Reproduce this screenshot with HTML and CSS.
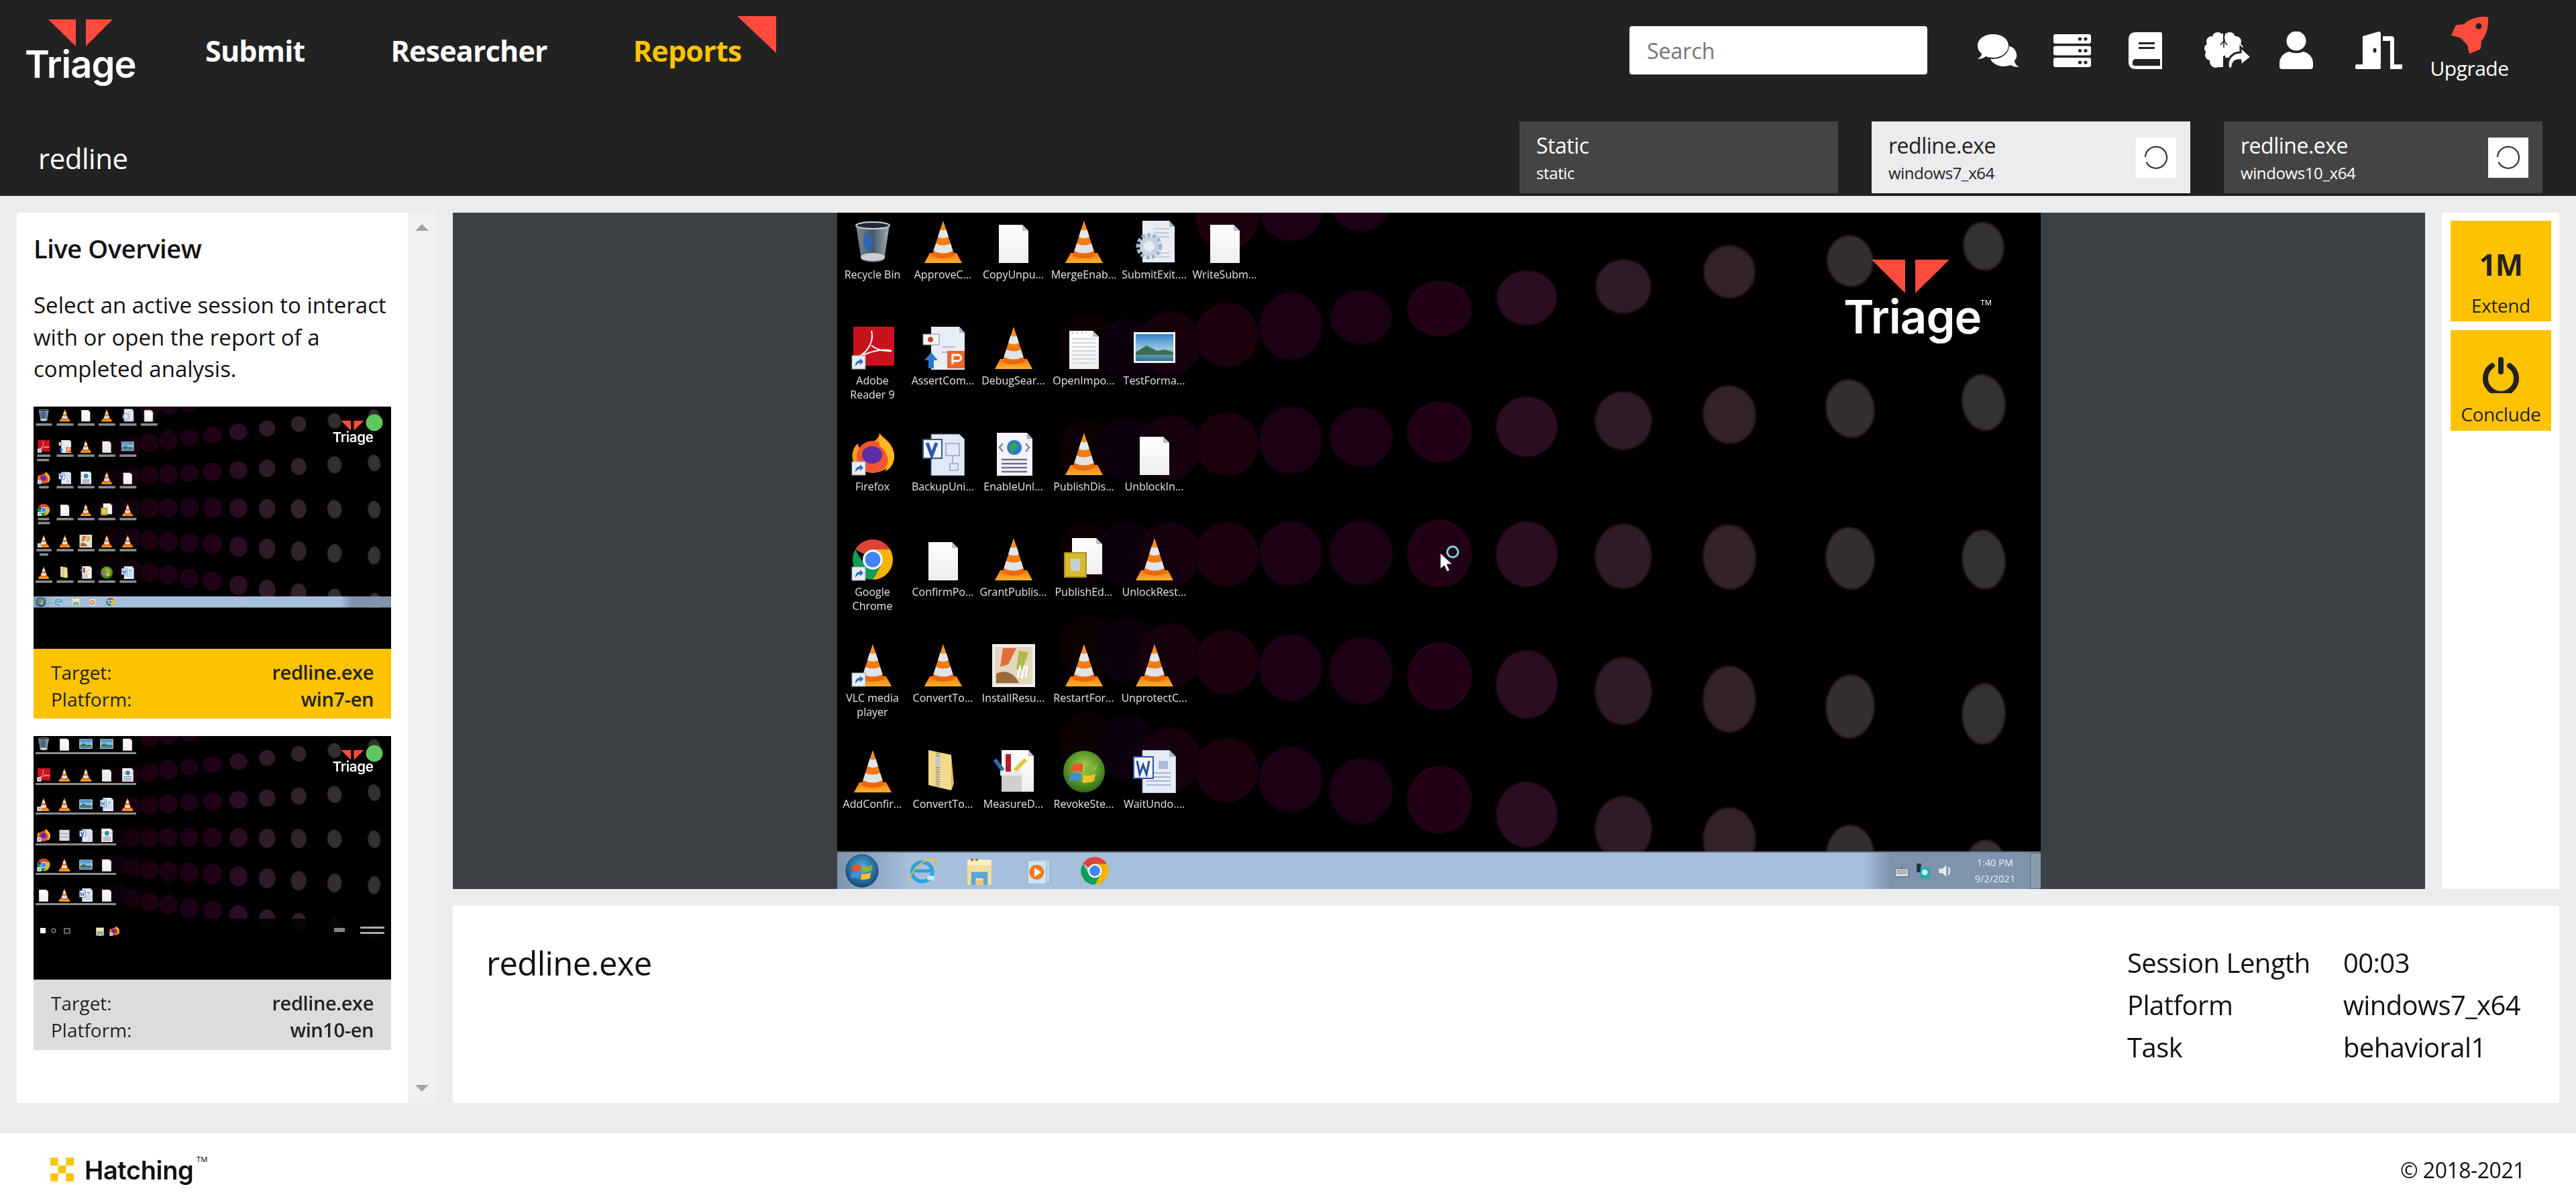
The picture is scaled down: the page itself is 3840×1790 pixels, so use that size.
FILE: index.html
```html
<!DOCTYPE html>
<html lang="en">
<head>
<meta charset="utf-8">
<title>Triage - redline</title>
<link rel="stylesheet" href="styles.css">
</head>
<body>
<svg class="sprite" aria-hidden="true">
  <defs>
    <linearGradient id="gOrange" x1="0" y1="0" x2="0" y2="1"><stop offset="0" stop-color="#ff9a1e"/><stop offset="1" stop-color="#e8650a"/></linearGradient>
    <linearGradient id="gBase" x1="0" y1="0" x2="0" y2="1"><stop offset="0" stop-color="#f0790d"/><stop offset="1" stop-color="#ffb22e"/></linearGradient>
    <linearGradient id="gPage" x1="0" y1="0" x2="0" y2="1"><stop offset="0" stop-color="#ffffff"/><stop offset="1" stop-color="#eeeeee"/></linearGradient>
    <linearGradient id="gBin" x1="0" y1="0" x2="1" y2="0"><stop offset="0" stop-color="#7b8a94"/><stop offset=".5" stop-color="#46586a"/><stop offset="1" stop-color="#a2adb5"/></linearGradient>
    <linearGradient id="gSky" x1="0" y1="0" x2="0" y2="1"><stop offset="0" stop-color="#2f83c9"/><stop offset=".55" stop-color="#9cc9e0"/><stop offset="1" stop-color="#2a6e96"/></linearGradient>
    <linearGradient id="gBar" x1="0" y1="0" x2="1" y2="0"><stop offset="0" stop-color="#7e94ac"/><stop offset=".06" stop-color="#a6bfdc"/><stop offset=".86" stop-color="#a6bfdc"/><stop offset=".89" stop-color="#7f93ad"/><stop offset="1" stop-color="#7f93ad"/></linearGradient>
    <radialGradient id="gOrb" cx=".5" cy=".4" r=".6"><stop offset="0" stop-color="#a8d84e"/><stop offset="1" stop-color="#2e6b12"/></radialGradient>
    <radialGradient id="gStart" cx=".5" cy=".4" r=".6"><stop offset="0" stop-color="#5bb2e0"/><stop offset="1" stop-color="#0f4a7c"/></radialGradient>
    <filter id="soft"><feGaussianBlur stdDeviation="1.6"/></filter>
  </defs>

  <symbol id="chat" viewBox="0 0 62 49"><path d="M27 25C38 18 50 14 56 24c4 7 2 13-1 15 0 4 3 8 7 10-5 0-10-1-13-3-5 2-14 3-20 0-6-3-9-6-10-10z" fill="#fff"/><ellipse cx="23" cy="17.500" rx="24" ry="19.500" fill="#222"/><path d="M23 0C10 0 0 7 0 17c0 5 2 9 6 12 0 3-2 5-6 8 4 0 9-1 12-4 3 1 7 2 11 2 13 0 23-8 23-18S36 0 23 0z" fill="#fff"/></symbol>
  <symbol id="servers" viewBox="0 0 56 49"><g fill="#fff"><rect width="56" height="14" rx="3"/><rect y="17.500" width="56" height="14" rx="3"/><rect y="35" width="56" height="14" rx="3"/></g><g fill="#222"><circle cx="39.500" cy="7" r="2.600"/><circle cx="48" cy="7" r="2.600"/><circle cx="39.500" cy="24.500" r="2.600"/><circle cx="48" cy="24.500" r="2.600"/><circle cx="39.500" cy="42" r="2.600"/><circle cx="48" cy="42" r="2.600"/></g></symbol>
  <symbol id="book" viewBox="0 0 50 55"><path d="M11 0H48q2 0 2 2V40H8v10h42v3q0 2-2 2H11Q0 55 0 44V11Q0 0 11 0z" fill="#fff"/><path d="M8 42H50V49H8q-4 0-4-3.500T8 42z" fill="#222"/><path d="M47 40h3v15h-3z" fill="#fff"/><rect x="15" y="15" width="24" height="3" fill="#222"/><rect x="15" y="22" width="24" height="3" fill="#222"/><path d="M2 40h4v8h-4z" fill="#fff"/></symbol>
  <symbol id="brain" viewBox="0 0 70 54"><g fill="#fff"><circle cx="20" cy="8" r="8"/><circle cx="11" cy="14" r="8"/><circle cx="7" cy="24" r="7"/><circle cx="9" cy="34" r="8"/><circle cx="17" cy="44" r="9"/><circle cx="20" cy="26" r="13"/><rect x="17" y="2" width="11" height="50"/><circle cx="38" cy="8" r="8"/><circle cx="47" cy="14" r="8"/><circle cx="51" cy="24" r="7"/><circle cx="38" cy="24" r="13"/><rect x="31" y="2" width="11" height="36"/></g><path d="M29 13v10M29 13l-5 6M29 13l5 6" stroke="#222" stroke-width="1.600" fill="none"/><path d="M36 54C32 40 42 30 54 30V22L70 37 54 50V42C46 41 41 45 42 54z" fill="#fff" stroke="#222" stroke-width="3"/></symbol>
  <symbol id="person" viewBox="0 0 50 56"><circle cx="25" cy="14" r="14.500" fill="#fff"/><path d="M0 47C0 38 7 31 15 30c6 3 14 3 20 0 8 1 15 8 15 17v5q0 4-4 4H4q-4 0-4-4z" fill="#fff"/></symbol>
  <symbol id="door" viewBox="0 0 70 56"><path d="M11 7 35 0q3 0 3 3V49H11z" fill="#fff"/><rect y="49" width="38" height="7" rx="2" fill="#fff"/><ellipse cx="29" cy="28" rx="2.500" ry="3.500" fill="#222"/><path d="M41 7H54q4 0 4 4V49H70v5q0 2-2 2H52V14H41z" fill="#fff"/></symbol>
  <symbol id="rocket" viewBox="0 0 55 55"><path d="M53 0Q55 0 55 2C56 16 52 28 45 36L44 46Q44 48 42 49L27 55 24 42 13 31 0 28 6 14Q7 12 9 12L19 11C27 3 40-1 53 0z" fill="#ff4b3e"/><circle cx="41" cy="14" r="4.500" fill="#222"/></symbol>
  <symbol id="power" viewBox="0 0 54 54"><path d="M14 13a23 23 0 1 0 26 0" fill="none" stroke="#222" stroke-width="8" stroke-linecap="round"/><rect x="23" width="8" height="26" rx="4" fill="#222"/></symbol>
  <symbol id="spin" viewBox="0 0 36 36"><path d="M2 17A16 16 0 1 1 3.500 24.500" fill="none" stroke="#333" stroke-width="2.200"/></symbol>

  <symbol id="sc" viewBox="0 0 22 22"><rect x="1" y="1" width="20" height="20" fill="#e9eef3" stroke="#9aa3ab"/><path d="M6 17c0-6 3-9 7-9V5l5 5-5 5v-3c-3 0-5 2-7 5z" fill="#2a6fc4"/></symbol>
  <symbol id="cone" viewBox="0 0 64 64"><path d="M4 63 12 48H52L60 63z" fill="url(#gBase)"/><path d="M32 0 49 52Q32 60 15 52z" fill="url(#gOrange)"/><path d="M27.500 13Q32 16 36.500 13L40 24Q32 28 24 24z" fill="#e4e8ea"/><path d="M21 34Q32 39 43 34L46.500 45Q32 52 17.500 45z" fill="#dfe4e6"/></symbol>
  <symbol id="cones" viewBox="0 0 64 64"><use href="#cone" width="64" height="64"/><use href="#sc" x="0" y="42" width="22" height="22"/></symbol>
  <symbol id="doc" viewBox="0 0 64 64"><path d="M10 6H45L54 15V63H10z" fill="url(#gPage)"/><path d="M45 6 54 15H45z" fill="#b9c0c6"/></symbol>
  <symbol id="lines" viewBox="0 0 64 64"><use href="#doc" width="64" height="64"/><path d="M14 18H50M14 24H50M14 30H50M14 36H50M14 42H50M14 48H50M14 54H50" stroke="#c5cdd6" stroke-width="1.400"/><path d="M14 9h22" stroke="#aaa" stroke-width="2" stroke-dasharray="2 5"/></symbol>
  <symbol id="recycle" viewBox="0 0 64 64"><path d="M7 6Q32-2 57 6L49 58Q32 66 15 58z" fill="url(#gBin)"/><ellipse cx="32" cy="7" rx="25" ry="5" fill="#1d2a36" stroke="#cfd7dc" stroke-width="2"/><path d="M20 18l10 4 2 14-8 10-6-12z" fill="#2f67b5"/><ellipse cx="32" cy="54" rx="18" ry="6" fill="#c9ced1"/></symbol>
  <symbol id="adobe" viewBox="0 0 64 64"><rect x="3" y="0" width="61" height="58" fill="#c8121c"/><path d="M30 6c4 14-4 30-18 38M30 28c8 6 18 9 30 8-10-3-22-2-42 6" fill="none" stroke="#fff" stroke-width="2"/><use href="#sc" x="0" y="42" width="22" height="22"/></symbol>
  <symbol id="ppt" viewBox="0 0 64 64"><path d="M14 0H56L64 9V64H14z" fill="#e8eef6"/><path d="M56 0 64 9H56z" fill="#aab7c4"/><rect x="2" y="11" width="24" height="16" fill="#f4f6f8" stroke="#7b8794"/><circle cx="13" cy="19" r="4" fill="#c0442b"/><path d="M30 30H50M30 38H46" stroke="#b2bdcb" stroke-width="2"/><rect x="38" y="36" width="26" height="26" fill="#e9672d"/><path d="M46 56V42h8a4 4 0 0 1 0 9h-8" fill="none" stroke="#fff" stroke-width="3"/><path d="M10 62V50H4L14 38l10 12h-6v12z" fill="#2a78d2"/></symbol>
  <symbol id="photo" viewBox="0 0 64 64"><rect x="1" y="8" width="62" height="46" fill="#eef2f5"/><rect x="4" y="11" width="56" height="40" fill="url(#gSky)"/><path d="M4 38 20 28 36 36 48 34 60 38V42H4z" fill="#3d6d55"/></symbol>
  <symbol id="firefox" viewBox="0 0 64 64"><path d="M42 0C46 8 64 14 64 36A32 28 0 0 1 2 40C0 30 4 20 10 16c0 4 2 8 8 8C24 14 42 14 42 0z" fill="#ff9a1e"/><circle cx="32" cy="36" r="24" fill="#f2542d"/><path d="M42 2c6 10 22 14 22 34 0 10-6 18-14 22 8-10 6-30-8-38z" fill="#ffb81f"/><ellipse cx="31" cy="33" rx="15" ry="13" fill="#5b2ea8"/><use href="#sc" x="0" y="42" width="22" height="22"/></symbol>
  <symbol id="visio" viewBox="0 0 64 64"><path d="M14 2H56L64 10V64H14z" fill="#e2e8f4" stroke="#4b6aa5"/><path d="M36 16H56V34H36zM42 46H54V56H42z" fill="none" stroke="#8fa3c8" stroke-width="1.500"/><path d="M46 34V46" stroke="#8fa3c8" stroke-width="1.500"/><rect x="2" y="10" width="28" height="28" fill="#f4f6fb" stroke="#35558f" stroke-width="2"/><path d="M8 15l7 19 7-19" fill="none" stroke="#2e56b4" stroke-width="5"/></symbol>
  <symbol id="html" viewBox="0 0 64 64"><path d="M7 0H52L60 9V64H7z" fill="#f4f4f8"/><path d="M52 0 60 9H52z" fill="#aab"/><circle cx="33" cy="22" r="11" fill="#2a7bd0"/><path d="M26 18l8-5 4 8-6 5-1 6-5-7z" fill="#3aa34a"/><path d="M16 16l-5 6 5 6M50 16l5 6-5 6" fill="none" stroke="#7b8aa0" stroke-width="2.500"/><path d="M14 40H52M14 46H52M14 52H52M14 58H52" stroke="#6b6f8a" stroke-width="2.500"/></symbol>
  <symbol id="chrome" viewBox="0 0 64 64"><path d="M6 17A30 30 0 0 1 58 17H32A15 15 0 0 0 19 24z" fill="#db4437"/><path d="M58 17A30 30 0 0 1 32 62L45 39A15 15 0 0 0 32 17z" fill="#f4b400"/><path d="M32 62A30 30 0 0 1 6 17L19 39A15 15 0 0 0 45 39z" fill="#0f9d58"/><circle cx="32" cy="32" r="15" fill="#fff"/><circle cx="32" cy="32" r="11.500" fill="#4285f4"/></symbol>
  <symbol id="chromes" viewBox="0 0 64 64"><use href="#chrome" width="64" height="64"/><use href="#sc" x="0" y="42" width="22" height="22"/></symbol>
  <symbol id="frame" viewBox="0 0 64 64"><path d="M14 0H50L59 9V54H14z" fill="url(#gPage)"/><path d="M50 0 59 9H50z" fill="#b9c0c6"/><rect x="3" y="22" width="32" height="36" fill="#d6bc2a" stroke="#a8901a" stroke-width="2"/><rect x="12" y="31" width="14" height="18" fill="#c8ced2"/></symbol>
  <symbol id="paint" viewBox="0 0 64 64"><rect width="64" height="64" fill="#f1efe8"/><rect x="4" y="4" width="56" height="56" fill="#e2d8c0"/><path d="M16 6 36 6 24 30 12 34z" fill="#e46b3a"/><path d="M40 10l14 2-8 24-10 2z" fill="#b2b94a"/><path d="M6 44c14-6 26-2 34 14H6z" fill="#9a6a3c"/><path d="M38 50 42 32M44 52 48 32M50 50 52 32" stroke="#fff" stroke-width="2.500"/></symbol>
  <symbol id="zip" viewBox="0 0 64 64"><path d="M10 0 44 7V60L10 52z" fill="#f0db8c"/><path d="M44 7 48 50 44 60z" fill="#d8b95a"/><path d="M24 4V54" stroke="#9a9a9a" stroke-width="6" stroke-dasharray="2 1.500"/><rect x="20" y="10" width="8" height="14" rx="3" fill="#c7c9cc"/></symbol>
  <symbol id="tools" viewBox="0 0 64 64"><path d="M14 0H54L62 9V62H14z" fill="url(#gPage)"/><path d="M54 0 62 9H54z" fill="#b9c0c6"/><path d="M14 34H44V62H14z" fill="#cfcfcf"/><path d="M12 30H44V38H12z" fill="#e8e8e8"/><rect x="20" y="6" width="8" height="26" fill="#b81d24"/><path d="M4 14 16 30" stroke="#2a6fa8" stroke-width="6"/><path d="M50 14 34 30" stroke="#e1c63a" stroke-width="6"/></symbol>
  <symbol id="orb" viewBox="0 0 64 64"><circle cx="32" cy="32" r="31" fill="url(#gOrb)"/><path d="M14 22Q24 17 31 22L29 33Q20 29 12 33z" fill="#e9572c"/><path d="M34 22Q42 27 52 20L50 31Q42 36 32 33z" fill="#82b83a"/><path d="M12 36Q20 32 28 36L26 47Q18 43 10 47z" fill="#3f8fd8"/><path d="M31 37Q40 40 49 35L47 46Q38 50 29 48z" fill="#f5c228"/></symbol>
  <symbol id="word" viewBox="0 0 64 64"><path d="M14 0H54L64 10V64H14z" fill="#e4ecf8" stroke="#8aa2c8"/><path d="M54 0 64 10H54z" fill="#a8b8cc"/><path d="M20 34H56M20 40H56M20 46H56M20 52H56" stroke="#8ea4c4" stroke-width="1.500"/><rect x="38" y="16" width="14" height="12" fill="#a8bcd8"/><rect x="1" y="10" width="29" height="32" fill="#f0f3fa" stroke="#2a54a4" stroke-width="2"/><path d="M6 16l4 20 5-14 5 14 4-20" fill="none" stroke="#244c9c" stroke-width="3"/></symbol>
  <symbol id="gear" viewBox="0 0 64 64"><path d="M14 0H54L62 9V62H14z" fill="#e9edf3"/><path d="M54 0 62 9H54z" fill="#aab4c0"/><path d="M30 12H54M30 18H54M30 24H54M34 48H54M36 54H54" stroke="#b5c0cd" stroke-width="1.500"/><circle cx="24" cy="38" r="15" fill="none" stroke="#9db4cc" stroke-width="9" stroke-dasharray="5 2.500"/><circle cx="24" cy="38" r="11" fill="none" stroke="#c5d2e0" stroke-width="6"/></symbol>
  <symbol id="start" viewBox="0 0 64 64"><circle cx="32" cy="32" r="31" fill="url(#gStart)" stroke="#1a3a5c"/><path d="M14 22Q24 17 31 22L29 33Q20 29 12 33z" fill="#e9572c"/><path d="M34 22Q42 27 52 20L50 31Q42 36 32 33z" fill="#82b83a"/><path d="M12 36Q20 32 28 36L26 47Q18 43 10 47z" fill="#3f8fd8"/><path d="M31 37Q40 40 49 35L47 46Q38 50 29 48z" fill="#f5c228"/></symbol>
  <symbol id="ie" viewBox="0 0 64 64"><ellipse cx="33" cy="34" rx="22" ry="21" fill="none" stroke="#2ba3e6" stroke-width="8"/><path d="M12 32H56" stroke="#2ba3e6" stroke-width="7"/><path d="M44 47H58" stroke="#c9edfb" stroke-width="9"/><path d="M6 56C2 42 30 6 56 6c6 2 4 10 0 16" fill="none" stroke="#f1c40f" stroke-width="2.500"/></symbol>
  <symbol id="explorer" viewBox="0 0 64 64"><path d="M6 8H58V62H6z" fill="#f4df9a"/><path d="M6 8H58V20H6z" fill="#faeec2"/><circle cx="16" cy="8" r="3" fill="#d94a2a"/><circle cx="26" cy="8" r="3" fill="#58a23a"/><path d="M14 34H50V62H40V48H24V62H14z" fill="#5aa6d8"/><rect x="24" y="52" width="16" height="10" fill="#f0c870"/></symbol>
  <symbol id="wmp" viewBox="0 0 64 64"><rect x="20" y="6" width="40" height="52" fill="#b7d4ea" stroke="#6b9fc8"/><rect x="12" y="10" width="40" height="50" fill="#cfe4f2" stroke="#7ba8cc"/><circle cx="31" cy="35" r="16" fill="#ee7b1e"/><path d="M26 25 41 35 26 45z" fill="#fff"/></symbol>
  <symbol id="printer" viewBox="0 0 64 64"><rect x="8" y="6" width="48" height="52" fill="#d9dde0"/><rect x="8" y="22" width="48" height="4" fill="#9aa1a6"/><rect x="8" y="38" width="48" height="4" fill="#9aa1a6"/></symbol>

  <symbol id="wall" viewBox="0 0 1794 1008">
    <g filter="url(#soft)">
      <g fill="#0c0206"><ellipse cx="372" cy="195" rx="42" ry="46"/><ellipse cx="372" cy="355" rx="42" ry="46"/><ellipse cx="372" cy="508" rx="42" ry="46"/><ellipse cx="372" cy="645" rx="42" ry="46"/><ellipse cx="372" cy="790" rx="42" ry="46"/></g>
      <g fill="#100307"><ellipse cx="432" cy="205" rx="45" ry="47"/><ellipse cx="432" cy="352" rx="45" ry="47"/><ellipse cx="432" cy="508" rx="45" ry="48"/><ellipse cx="432" cy="652" rx="45" ry="48"/><ellipse cx="432" cy="798" rx="45" ry="48"/></g>
      <g fill="#140309"><ellipse cx="496" cy="195" rx="46" ry="48"/><ellipse cx="496" cy="350" rx="46" ry="48"/><ellipse cx="496" cy="509" rx="46" ry="48"/><ellipse cx="496" cy="660" rx="46" ry="48"/><ellipse cx="496" cy="815" rx="46" ry="48"/></g>
      <g fill="#1a030f"><ellipse cx="581" cy="10" rx="47" ry="46"/><ellipse cx="581" cy="182" rx="47" ry="48"/><ellipse cx="581" cy="345" rx="47" ry="48"/><ellipse cx="581" cy="509" rx="47" ry="48"/><ellipse cx="581" cy="670" rx="47" ry="48"/><ellipse cx="581" cy="831" rx="47" ry="48"/></g>
      <g fill="#1d0412"><ellipse cx="676" cy="-4" rx="47" ry="46"/><ellipse cx="676" cy="169" rx="47" ry="50"/><ellipse cx="676" cy="339" rx="47" ry="50"/><ellipse cx="676" cy="508" rx="47" ry="48"/><ellipse cx="676" cy="678" rx="47" ry="50"/><ellipse cx="676" cy="845" rx="47" ry="49"/></g>
      <g fill="#1f0414"><ellipse cx="781" cy="-18" rx="47" ry="46"/><ellipse cx="781" cy="156" rx="46" ry="40"/><ellipse cx="781" cy="334" rx="47" ry="44"/><ellipse cx="781" cy="507" rx="47" ry="48"/><ellipse cx="781" cy="683" rx="47" ry="50"/><ellipse cx="781" cy="862" rx="47" ry="49"/></g>
      <g stroke="#48101f" stroke-opacity=".45" stroke-width="2">
      <g fill="#220519"><ellipse cx="898" cy="143" rx="47" ry="40"/><ellipse cx="898" cy="327" rx="47" ry="44"/><ellipse cx="898" cy="508" rx="47" ry="49"/><ellipse cx="898" cy="691" rx="47" ry="49"/><ellipse cx="898" cy="875" rx="47" ry="49"/></g>
      <g fill="#2b1024"><ellipse cx="1028" cy="127" rx="44" ry="40"/><ellipse cx="1028" cy="319" rx="45" ry="44"/><ellipse cx="1028" cy="509" rx="45" ry="48"/><ellipse cx="1028" cy="703" rx="45" ry="50"/><ellipse cx="1028" cy="897" rx="45" ry="48"/></g>
      <g fill="#2d1b25"><ellipse cx="1172" cy="110" rx="41" ry="40"/><ellipse cx="1172" cy="310" rx="42" ry="43"/><ellipse cx="1172" cy="512" rx="42" ry="48"/><ellipse cx="1172" cy="713" rx="42" ry="50"/><ellipse cx="1172" cy="918" rx="42" ry="48"/></g>
      <g fill="#302329"><ellipse cx="1330" cy="88" rx="38" ry="39" transform="rotate(-8 1330 88)"/><ellipse cx="1330" cy="301" rx="39" ry="43" transform="rotate(-8 1330 301)"/><ellipse cx="1330" cy="513" rx="39" ry="48" transform="rotate(-5 1330 513)"/><ellipse cx="1330" cy="725" rx="39" ry="49"/><ellipse cx="1330" cy="934" rx="39" ry="47"/></g>
      <g fill="#322d30"><ellipse cx="1510" cy="72" rx="34" ry="38" transform="rotate(-10 1510 72)"/><ellipse cx="1510" cy="292" rx="36" ry="43" transform="rotate(-10 1510 292)"/><ellipse cx="1510" cy="515" rx="36" ry="46" transform="rotate(-6 1510 515)"/><ellipse cx="1510" cy="736" rx="36" ry="47" transform="rotate(3 1510 736)"/><ellipse cx="1510" cy="960" rx="36" ry="47"/></g>
      <g fill="#313031"><ellipse cx="1709" cy="50" rx="30" ry="36" transform="rotate(-10 1709 50)"/><ellipse cx="1709" cy="283" rx="32" ry="42" transform="rotate(-10 1709 283)"/><ellipse cx="1709" cy="517" rx="32" ry="44" transform="rotate(-6 1709 517)"/><ellipse cx="1709" cy="747" rx="32" ry="45" transform="rotate(3 1709 747)"/><ellipse cx="1712" cy="979" rx="32" ry="44"/></g>
      </g>
    </g>
  </symbol>
  <symbol id="tris" viewBox="0 0 116 50"><path d="M0 0H50V50zM65 0H116L65 50z" fill="#ff4b3e"/></symbol>
  <symbol id="w7icons" viewBox="0 0 1794 1008">
    <use href="#recycle" x="19" y="12" width="64" height="64"/><use href="#cone" x="125" y="12" width="64" height="64"/><use href="#doc" x="230" y="12" width="64" height="64"/><use href="#cone" x="335" y="12" width="64" height="64"/><use href="#gear" x="440" y="12" width="64" height="64"/><use href="#doc" x="545" y="12" width="64" height="64"/>
    <use href="#adobe" x="19" y="168" width="64" height="64"/><use href="#ppt" x="125" y="168" width="64" height="64"/><use href="#cone" x="230" y="168" width="64" height="64"/><use href="#lines" x="335" y="168" width="64" height="64"/><use href="#photo" x="440" y="168" width="64" height="64"/>
    <use href="#firefox" x="19" y="326" width="64" height="64"/><use href="#visio" x="125" y="326" width="64" height="64"/><use href="#html" x="230" y="326" width="64" height="64"/><use href="#cone" x="335" y="326" width="64" height="64"/><use href="#doc" x="440" y="326" width="64" height="64"/>
    <use href="#chromes" x="19" y="486" width="64" height="64"/><use href="#doc" x="125" y="486" width="64" height="64"/><use href="#cone" x="230" y="486" width="64" height="64"/><use href="#frame" x="335" y="486" width="64" height="64"/><use href="#cone" x="440" y="486" width="64" height="64"/>
    <use href="#cones" x="19" y="643" width="64" height="64"/><use href="#cone" x="125" y="643" width="64" height="64"/><use href="#paint" x="230" y="643" width="64" height="64"/><use href="#cone" x="335" y="643" width="64" height="64"/><use href="#cone" x="440" y="643" width="64" height="64"/>
    <use href="#cone" x="19" y="801" width="64" height="64"/><use href="#zip" x="125" y="801" width="64" height="64"/><use href="#tools" x="230" y="801" width="64" height="64"/><use href="#orb" x="335" y="801" width="64" height="64"/><use href="#word" x="440" y="801" width="64" height="64"/>
    <g fill="#8d8d8d"><rect x="12" y="84" width="80" height="12"/><rect x="116" y="84" width="84" height="12"/><rect x="222" y="84" width="84" height="12"/><rect x="326" y="84" width="84" height="12"/><rect x="432" y="84" width="84" height="12"/><rect x="538" y="84" width="84" height="12"/>
    <rect x="18" y="240" width="66" height="12"/><rect x="18" y="262" width="60" height="12"/><rect x="116" y="240" width="84" height="12"/><rect x="222" y="240" width="84" height="12"/><rect x="326" y="240" width="84" height="12"/><rect x="432" y="240" width="84" height="12"/>
    <rect x="28" y="398" width="48" height="12"/><rect x="116" y="398" width="84" height="12"/><rect x="222" y="398" width="84" height="12"/><rect x="326" y="398" width="84" height="12"/><rect x="432" y="398" width="84" height="12"/>
    <rect x="22" y="558" width="56" height="12"/><rect x="22" y="578" width="60" height="12"/><rect x="116" y="558" width="84" height="12"/><rect x="222" y="558" width="84" height="12"/><rect x="326" y="558" width="84" height="12"/><rect x="432" y="558" width="84" height="12"/>
    <rect x="14" y="714" width="76" height="12"/><rect x="30" y="736" width="44" height="12"/><rect x="116" y="714" width="84" height="12"/><rect x="222" y="714" width="84" height="12"/><rect x="326" y="714" width="84" height="12"/><rect x="432" y="714" width="84" height="12"/>
    <rect x="10" y="872" width="84" height="12"/><rect x="116" y="872" width="84" height="12"/><rect x="222" y="872" width="84" height="12"/><rect x="326" y="872" width="84" height="12"/><rect x="432" y="872" width="84" height="12"/></g>
  </symbol>
</svg>

<header class="topbar">
  <div class="bar-main">
    <a class="brand">
      <svg class="brand-mark" viewBox="0 0 96 40"><path d="M0 0H41V40zM56 0H96L56 40z" fill="#ff4b3e"/></svg>
      <span class="brand-name">Triage</span>
    </a>
    <nav class="nav">
      <a class="nav-link">Submit</a>
      <a class="nav-link">Researcher</a>
      <a class="nav-link nav-active">Reports<svg class="ribbon" viewBox="0 0 58 55"><path d="M0 0H58V55z" fill="#ff4b3e"/></svg></a>
    </nav>
    <div class="tools">
      <div class="search">Search</div>
      <a class="tool"><svg class="t-chat"><use href="#chat"/></svg></a>
      <a class="tool"><svg class="t-servers"><use href="#servers"/></svg></a>
      <a class="tool"><svg class="t-book"><use href="#book"/></svg></a>
      <a class="tool"><svg class="t-brain"><use href="#brain"/></svg></a>
      <a class="tool"><svg class="t-person"><use href="#person"/></svg></a>
      <a class="tool"><svg class="t-door"><use href="#door"/></svg></a>
      <a class="upgrade"><svg class="t-rocket"><use href="#rocket"/></svg><span>Upgrade</span></a>
    </div>
  </div>
  <div class="bar-sub">
    <h1 class="title">redline</h1>
    <div class="tabs">
      <div class="tab"><div class="tab-text"><b>Static</b><span>static</span></div></div>
      <div class="tab tab-active"><div class="tab-text"><b>redline.exe</b><span>windows7_x64</span></div><div class="spinbox"><svg><use href="#spin"/></svg></div></div>
      <div class="tab"><div class="tab-text"><b>redline.exe</b><span>windows10_x64</span></div><div class="spinbox"><svg><use href="#spin"/></svg></div></div>
    </div>
  </div>
</header>

<main class="layout">
  <aside class="side">
    <div class="side-body">
      <h2 class="side-title">Live Overview</h2>
      <p class="side-text">Select an active session to interact with or open the report of a completed analysis.</p>
      <article class="thumb">
        <svg class="thumb-img" viewBox="0 0 533 361">
          <rect width="533" height="361" fill="#000"/>
          <g transform="scale(.2971)">
            <use href="#wall" width="1794" height="1008"/>
            <use href="#w7icons" width="1794" height="1008"/>
            <use href="#tris" x="1542" y="70" width="116" height="50"/>
            <text class="dlogo-t" x="1500" y="180">Triage</text>
            <rect y="952" width="1794" height="56" fill="url(#gBar)"/>
            <use href="#start" x="12" y="955" width="50" height="50"/><use href="#ie" x="102" y="958" width="44" height="44"/><use href="#explorer" x="190" y="958" width="44" height="44"/><use href="#wmp" x="274" y="958" width="44" height="44"/><use href="#chrome" x="363" y="958" width="44" height="44"/>
          </g>
          <circle cx="508" cy="24" r="12.500" fill="#5fc75f"/>
        </svg>
        <dl class="thumb-info thumb-on"><dt>Target:</dt><dd>redline.exe</dd><dt>Platform:</dt><dd>win7-en</dd></dl>
      </article>
      <article class="thumb">
        <svg class="thumb-img" viewBox="0 0 533 363">
          <rect width="533" height="363" fill="#000"/>
          <use href="#wall" width="533" height="300"/>
          <rect y="272" width="533" height="30" fill="#000" opacity=".85"/>
          <g>
            <use href="#recycle" x="5" y="2" width="20" height="20"/><use href="#doc" x="36" y="2" width="20" height="20"/><use href="#photo" x="68" y="2" width="20" height="20"/><use href="#photo" x="99" y="2" width="20" height="20"/><use href="#doc" x="130" y="2" width="20" height="20"/>
            <use href="#adobe" x="5" y="48" width="20" height="20"/><use href="#cone" x="36" y="48" width="20" height="20"/><use href="#cone" x="68" y="48" width="20" height="20"/><use href="#lines" x="99" y="48" width="20" height="20"/><use href="#html" x="130" y="48" width="20" height="20"/>
            <use href="#cones" x="5" y="92" width="20" height="20"/><use href="#cone" x="36" y="92" width="20" height="20"/><use href="#photo" x="68" y="92" width="20" height="20"/><use href="#word" x="99" y="92" width="20" height="20"/><use href="#cone" x="130" y="92" width="20" height="20"/>
            <use href="#firefox" x="5" y="138" width="20" height="20"/><use href="#printer" x="36" y="138" width="20" height="20"/><use href="#visio" x="68" y="138" width="20" height="20"/><use href="#html" x="99" y="138" width="20" height="20"/>
            <use href="#chromes" x="5" y="182" width="20" height="20"/><use href="#cone" x="36" y="182" width="20" height="20"/><use href="#photo" x="68" y="182" width="20" height="20"/><use href="#doc" x="99" y="182" width="20" height="20"/>
            <use href="#doc" x="5" y="227" width="20" height="20"/><use href="#cone" x="36" y="227" width="20" height="20"/><use href="#word" x="68" y="227" width="20" height="20"/><use href="#doc" x="99" y="227" width="20" height="20"/>
            <g fill="#8d8d8d"><rect x="3" y="24" width="150" height="3"/><rect x="3" y="70" width="150" height="3"/><rect x="3" y="114" width="150" height="3"/><rect x="3" y="160" width="120" height="3"/><rect x="3" y="204" width="120" height="3"/><rect x="3" y="249" width="120" height="3"/></g>
            <use href="#explorer" x="92" y="284" width="14" height="14"/><use href="#firefox" x="113" y="283" width="15" height="15"/><rect x="10" y="286" width="8" height="8" fill="#fff"/><circle cx="30" cy="290" r="3" fill="none" stroke="#ccc"/><rect x="46" y="287" width="8" height="7" fill="none" stroke="#ccc"/>
            <rect x="487" y="284" width="36" height="3" fill="#aaa"/><rect x="487" y="292" width="36" height="3" fill="#aaa"/><rect x="448" y="286" width="16" height="6" fill="#888"/>
          </g>
          <g transform="scale(.2971)">
            <use href="#tris" x="1542" y="70" width="116" height="50"/>
            <text class="dlogo-t" x="1500" y="180">Triage</text>
          </g>
          <circle cx="508" cy="26" r="12.500" fill="#5fc75f"/>
        </svg>
        <dl class="thumb-info thumb-off"><dt>Target:</dt><dd>redline.exe</dd><dt>Platform:</dt><dd>win10-en</dd></dl>
      </article>
    </div>
    <div class="scroll"><i class="arrow arrow-up"></i><i class="arrow arrow-down"></i></div>
  </aside>

  <section class="screen">
    <div class="desktop">
      <svg class="desk-wall" viewBox="0 0 1794 1008">
        <use href="#wall" width="1794" height="1008"/>
        <use href="#tris" x="1542" y="70" width="116" height="50"/>
        <text class="dlogo-t" x="1500" y="180">Triage</text>
        <text class="dlogo-tm" x="1704" y="138">TM</text>
        <circle cx="917.500" cy="505.600" r="8" fill="none" stroke="#7fd6da" stroke-width="3"/>
        <path d="M899 507v24l6-5 4 9 4-2-4-9h8z" fill="#fff" stroke="#111"/>
      </svg>
      <div class="desk-icons">
        <div class="desk-row">
          <div class="dicon"><svg><use href="#recycle"/></svg><span>Recycle Bin</span></div>
          <div class="dicon"><svg><use href="#cone"/></svg><span>ApproveC...</span></div>
          <div class="dicon"><svg><use href="#doc"/></svg><span>CopyUnpu...</span></div>
          <div class="dicon"><svg><use href="#cone"/></svg><span>MergeEnab...</span></div>
          <div class="dicon"><svg><use href="#gear"/></svg><span>SubmitExit....</span></div>
          <div class="dicon"><svg><use href="#doc"/></svg><span>WriteSubm...</span></div>
        </div>
        <div class="desk-row">
          <div class="dicon"><svg><use href="#adobe"/></svg><span>Adobe<br>Reader 9</span></div>
          <div class="dicon"><svg><use href="#ppt"/></svg><span>AssertCom...</span></div>
          <div class="dicon"><svg><use href="#cone"/></svg><span>DebugSear...</span></div>
          <div class="dicon"><svg><use href="#lines"/></svg><span>OpenImpo...</span></div>
          <div class="dicon"><svg><use href="#photo"/></svg><span>TestForma...</span></div>
        </div>
        <div class="desk-row">
          <div class="dicon"><svg><use href="#firefox"/></svg><span>Firefox</span></div>
          <div class="dicon"><svg><use href="#visio"/></svg><span>BackupUni...</span></div>
          <div class="dicon"><svg><use href="#html"/></svg><span>EnableUnl...</span></div>
          <div class="dicon"><svg><use href="#cone"/></svg><span>PublishDis...</span></div>
          <div class="dicon"><svg><use href="#doc"/></svg><span>UnblockIn...</span></div>
        </div>
        <div class="desk-row">
          <div class="dicon"><svg><use href="#chromes"/></svg><span>Google<br>Chrome</span></div>
          <div class="dicon"><svg><use href="#doc"/></svg><span>ConfirmPo...</span></div>
          <div class="dicon"><svg><use href="#cone"/></svg><span>GrantPublis...</span></div>
          <div class="dicon"><svg><use href="#frame"/></svg><span>PublishEd...</span></div>
          <div class="dicon"><svg><use href="#cone"/></svg><span>UnlockRest...</span></div>
        </div>
        <div class="desk-row">
          <div class="dicon"><svg><use href="#cones"/></svg><span>VLC media<br>player</span></div>
          <div class="dicon"><svg><use href="#cone"/></svg><span>ConvertTo...</span></div>
          <div class="dicon"><svg><use href="#paint"/></svg><span>InstallResu...</span></div>
          <div class="dicon"><svg><use href="#cone"/></svg><span>RestartFor...</span></div>
          <div class="dicon"><svg><use href="#cone"/></svg><span>UnprotectC...</span></div>
        </div>
        <div class="desk-row">
          <div class="dicon"><svg><use href="#cone"/></svg><span>AddConfir...</span></div>
          <div class="dicon"><svg><use href="#zip"/></svg><span>ConvertTo...</span></div>
          <div class="dicon"><svg><use href="#tools"/></svg><span>MeasureD...</span></div>
          <div class="dicon"><svg><use href="#orb"/></svg><span>RevokeSte...</span></div>
          <div class="dicon"><svg><use href="#word"/></svg><span>WaitUndo....</span></div>
        </div>
      </div>
      <div class="taskbar">
        <svg class="tb-start"><use href="#start"/></svg>
        <svg class="tb-app"><use href="#ie"/></svg>
        <svg class="tb-app"><use href="#explorer"/></svg>
        <svg class="tb-app"><use href="#wmp"/></svg>
        <svg class="tb-app"><use href="#chrome"/></svg>
        <div class="tray">
          <svg class="tray-ico" viewBox="0 0 20 20"><rect x="1" y="7" width="18" height="11" rx="1" fill="#d5dbe2" stroke="#59636e"/><path d="M3 10h14M3 13h14M10 7V3" stroke="#59636e"/></svg>
          <svg class="tray-ico" viewBox="0 0 20 22"><rect x="1" y="1" width="6" height="12" fill="#263238"/><rect x="6" y="6" width="13" height="15" fill="#2aa7a7"/><circle cx="12" cy="13" r="4" fill="#bff"/></svg>
          <svg class="tray-ico" viewBox="0 0 20 22"><path d="M2 8H7L12 3V19L7 14H2z" fill="#e6ebf0"/><path d="M15 6q3 5 0 10" fill="none" stroke="#e6ebf0" stroke-width="2"/></svg>
          <div class="clock"><span>1:40 PM</span><span>9/2/2021</span></div>
          <i class="show-desk"></i>
        </div>
      </div>
    </div>
  </section>

  <aside class="actions">
    <button class="act"><span class="act-big">1M</span><span class="act-label act-label-a">Extend</span></button>
    <button class="act"><svg class="act-ico"><use href="#power"/></svg><span class="act-label act-label-b">Conclude</span></button>
  </aside>

  <section class="info">
    <h2 class="info-title">redline.exe</h2>
    <dl class="stats"><dt>Session Length</dt><dd>00:03</dd><dt>Platform</dt><dd>windows7_x64</dd><dt>Task</dt><dd>behavioral1</dd></dl>
  </section>
</main>

<footer class="foot">
  <div class="hatching">
    <svg class="hatch-mark" viewBox="0 0 3 3"><path d="M0 0h1v1H0zM2 0h1v1H2zM1 1h1v1H1zM0 2h1v1H0zM2 2h1v1H2z" fill="#fec300"/></svg>
    <span class="hatch-name">Hatching</span><span class="hatch-tm">TM</span>
  </div>
  <div class="copy">© 2018-2021</div>
</footer>
</body>
</html>
```

FILE: styles.css
```css
* { box-sizing: border-box; }
html, body { margin: 0; padding: 0; }
body {
  width: 3840px;
  height: 1790px;
  display: flex;
  flex-direction: column;
  background: #ebecee;
  font-family: "Open Sans", "Liberation Sans", sans-serif;
  color: #111;
  overflow: hidden;
}
.sprite { position: absolute; width: 0; height: 0; }
.dlogo-t { font-family: Inter, sans-serif; font-weight: 600; font-size: 69px; fill: #fff; letter-spacing: -1px; }
.dlogo-tm { font-family: Inter, sans-serif; font-size: 11px; fill: #fff; }

/* header */
.topbar { background: #222; height: 292px; flex: none; color: #fff; }
.bar-main { height: 150px; display: flex; align-items: flex-start; padding-left: 37px; }
.brand { width: 269px; padding-top: 29px; display: flex; flex-direction: column; flex: none; }
.brand-mark { width: 96px; height: 40px; margin-left: 35px; display: block; }
.brand-name { font-family: Inter, sans-serif; font-weight: 600; font-size: 56px; line-height: 58px; margin-top: -2px; letter-spacing: -1px; }
.nav { display: flex; gap: 128px; padding-top: 46px; }
.nav-link { position: relative; font-size: 43px; line-height: 60px; font-weight: 700; letter-spacing: -.8px; color: #fff; }
.nav-active { color: #fec300; }
.ribbon { position: absolute; width: 58px; height: 55px; left: 155px; top: -22px; }
.tools { margin-left: auto; padding-right: 101px; height: 150px; display: flex; align-items: center; }
.search { width: 444px; height: 72px; margin-right: 75px; background: #fff; border-radius: 4px; color: #757575; font-size: 32px; line-height: 74px; padding-left: 26px; }
.tool { width: 112.500px; display: flex; align-items: center; flex: none; }
.tool svg { display: block; }
.t-chat { width: 62px; height: 49px; }
.t-servers { width: 56px; height: 49px; }
.t-book { width: 50px; height: 55px; }
.t-brain { width: 70px; height: 54px; }
.t-person { width: 50px; height: 56px; }
.t-door { width: 70px; height: 56px; }
.upgrade { width: 116px; height: 114px; margin-top: 6px; display: flex; flex-direction: column; align-items: center; }
.t-rocket { width: 55px; height: 55px; display: block; flex: none; margin-top: 4px; }
.upgrade span { font-size: 30px; line-height: 44px; letter-spacing: -.5px; }
.bar-sub { height: 142px; padding: 31px 50px 4px 57px; display: flex; align-items: center; justify-content: space-between; }
.title { margin: 2px 0 0; font-size: 42px; font-weight: 400; line-height: 60px; letter-spacing: -.5px; }
.tabs { display: flex; gap: 50px; }
.tab { width: 475px; height: 107px; background: #444; color: #fff; display: flex; align-items: center; justify-content: space-between; padding: 0 21px 0 25px; }
.tab-active { background: #ebecee; color: #222; }
.tab-text { display: flex; flex-direction: column; }
.tab-text b { font-size: 32px; line-height: 46px; font-weight: 500; letter-spacing: -.5px; }
.tab-text span { font-size: 24px; line-height: 36px; letter-spacing: -.4px; }
.spinbox { width: 60px; height: 60px; background: #fff; display: flex; align-items: center; justify-content: center; }
.spinbox svg { width: 36px; height: 36px; display: block; }

/* layout */
.layout {
  flex: 1;
  min-height: 0;
  padding: 25px 25px 45px;
  display: grid;
  grid-template-columns: 625px 2940px 175px;
  grid-template-rows: 1008px 294px;
  gap: 25px;
}

/* sidebar */
.side { grid-row: 1 / 3; display: flex; }
.side-body { width: 583px; background: #fff; padding: 25px; }
.side-title { margin: 0; font-size: 38px; line-height: 56px; font-weight: 600; letter-spacing: -.4px; }
.side-text { margin: 33px 0 32.500px; font-size: 33px; line-height: 47.500px; }
.thumb { margin-bottom: 26px; }
.thumb-img { display: block; width: 533px; }
.thumb-info { margin: 0; padding: 15px 26px 9px; display: grid; grid-template-columns: 1fr auto; font-size: 28px; line-height: 40px; color: #222; }
.thumb-info dt { font-weight: 400; }
.thumb-info dd { margin: 0; text-align: right; font-size: 29px; font-weight: 600; letter-spacing: -.4px; }
.thumb-on { background: #fec300; }
.thumb-off { background: #dcdcdc; padding-bottom: 10px; }
.scroll { width: 42px; background: #f1f1f1; display: flex; flex-direction: column; align-items: center; justify-content: space-between; padding: 17px 0; }
.arrow { width: 0; height: 0; border-left: 10px solid transparent; border-right: 10px solid transparent; }
.arrow-up { border-bottom: 10px solid #a3a3a3; }
.arrow-down { border-top: 10px solid #a3a3a3; }

/* remote screen */
.screen { background: #3b4044; display: flex; justify-content: center; }
.desktop { position: relative; width: 1794px; height: 1008px; background: #000; overflow: hidden; display: flex; flex-direction: column; }
.desk-wall { position: absolute; inset: 0; width: 1794px; height: 1008px; }
.desk-icons { position: relative; height: 952px; padding-top: 12px; overflow: hidden; flex: none; }
.desk-row { display: flex; height: 157.800px; }
.dicon { width: 105px; display: flex; flex-direction: column; align-items: center; color: #e6e6e6; font-size: 16px; line-height: 21px; text-align: center; flex: none; }
.dicon svg { width: 64px; height: 64px; display: block; margin-bottom: 6px; flex: none; }
.dicon span { white-space: nowrap; }
.taskbar { position: relative; height: 56px; flex: none; display: flex; align-items: center; gap: 42px; padding-left: 12px; background: linear-gradient(90deg, #7e94ac 0, #a6bfdc 110px); border-top: 2px solid #6e7f92; }
.tb-start { width: 50px; height: 50px; display: block; flex: none; }
.tb-app { width: 44px; height: 44px; display: block; flex: none; }
.tray { margin-left: auto; height: 54px; display: flex; align-items: center; width: 264px; background: linear-gradient(90deg, #a6bfdc 0, #7f93ad 40px); padding-left: 46px; gap: 10px; }
.tray-ico { width: 22px; height: 24px; display: block; flex: none; }
.clock { margin-left: 16px; width: 76px; display: flex; flex-direction: column; align-items: center; color: #f0f3f6; font-size: 14.500px; line-height: 24px; flex: none; }
.show-desk { margin-left: 4px; width: 20px; height: 54px; background: #8b9aac; border: 1px solid #5f6d7c; flex: none; }

/* right actions */
.actions { background: #fff; padding: 12px 12px 0 13px; display: flex; flex-direction: column; gap: 13px; }
.act { width: 150px; height: 150px; border: 0; padding: 0; background: #fec300; color: #222; font-family: inherit; display: flex; flex-direction: column; align-items: center; }
.act-big { font-size: 44px; line-height: 58px; font-weight: 700; margin-top: 36px; letter-spacing: -1px; }
.act-ico { width: 54px; height: 54px; margin-top: 40px; display: block; flex: none; }
.act-label { font-size: 28px; line-height: 40px; letter-spacing: -.4px; }
.act-label-a { margin-top: 12px; }
.act-label-b { margin-top: 11px; }

/* info */
.info { grid-column: 2 / 4; background: #fff; padding: 0 58px 0 50px; display: flex; justify-content: space-between; align-items: flex-start; }
.info-title { margin: 53px 0 0; font-size: 49px; line-height: 64px; font-weight: 500; letter-spacing: -.6px; }
.stats { margin: 53px 0 0; display: grid; grid-template-columns: 322px auto; font-size: 40px; line-height: 63px; }
.stats dt { font-weight: 400; letter-spacing: -.5px; }
.stats dd { margin: 0; font-weight: 500; letter-spacing: -.6px; }

/* footer */
.foot { height: 101px; flex: none; background: #fff; display: flex; align-items: center; justify-content: space-between; padding: 8px 76px 0 75px; }
.hatching { display: flex; align-items: flex-start; }
.hatch-mark { width: 35px; height: 36px; display: block; margin-top: 4px; margin-right: 16px; }
.hatch-name { font-family: Inter, sans-serif; font-size: 38px; line-height: 46px; font-weight: 600; letter-spacing: -.4px; }
.hatch-tm { font-family: Inter, sans-serif; font-size: 11px; line-height: 14px; margin-left: 4px; }
.copy { font-size: 32px; line-height: 44px; letter-spacing: -.5px; }
```
